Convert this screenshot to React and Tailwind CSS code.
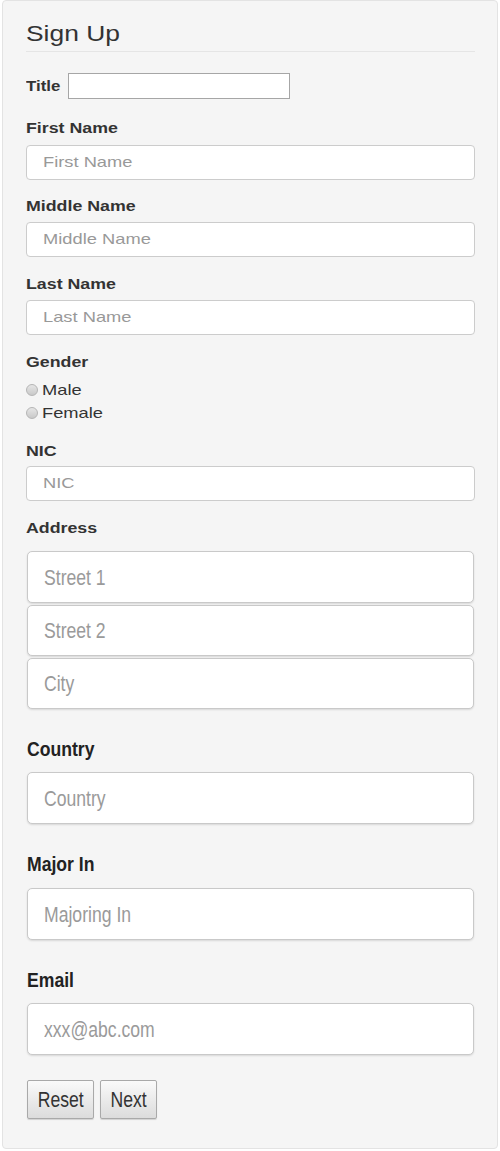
import React from "react";

const Wide = ({ children, className = "" }) => (
  <span className={`inline-block origin-left whitespace-nowrap ${className}`}>{children}</span>
);

// upper form: label + small input
const Field = ({ label, placeholder, top = "mt-4", gap = "mt-[6px]" }) => (
  <>
    <div className={`${top} h-5 leading-5 text-[14px] font-bold text-[#333]`}>
      <Wide className="scale-x-[1.27]">{label}</Wide>
    </div>
    <div className={`${gap} h-[35px] w-full rounded-[4px] border border-[#ccc] bg-white pl-4 flex items-center text-[15px] text-[#999]`}>
      <Wide className="scale-x-[1.22]">{placeholder}</Wide>
    </div>
  </>
);

// lower form: big input
const BigInput = ({ placeholder, className = "", short = false }) => (
  <div
    className={`ml-px ${short ? "h-[51px]" : "h-[52px]"} w-[447px] rounded-[5px] border border-[#c9c9c9] bg-white pl-4 flex items-center text-[22px] text-[#9a9a9a] shadow-[0_1px_2px_rgba(0,0,0,0.12)] ${className}`}
  >
    <Wide className="scale-x-[0.8]">{placeholder}</Wide>
  </div>
);

const BigLabel = ({ children, top = "mt-7" }) => (
  <div className={`${top} ml-px h-6 leading-6 text-[20px] font-bold text-[#222]`}>
    <Wide className="scale-x-[0.88]">{children}</Wide>
  </div>
);

const Radio = ({ label }) => (
  <div className="h-[23px] flex items-center gap-1 text-[15px] text-[#333]">
    <span className="-mt-[2px] h-3 w-3 rounded-full border border-[#b5b5b5] bg-gradient-to-b from-[#e6e6e6] to-[#c9c9c9]" />
    <Wide className="scale-x-[1.22]">{label}</Wide>
  </div>
);

const Button = ({ children, width }) => (
  <button
    className={`${width} h-[39px] rounded-[2px] border border-[#a9a9a9] bg-gradient-to-b from-[#fafafa] to-[#dcdcdc] text-[22px] text-[#333] shadow-[0_1px_1px_rgba(0,0,0,0.15)] flex items-center justify-center`}
  >
    <span className="inline-block origin-center scale-x-[0.8] whitespace-nowrap">{children}</span>
  </button>
);

export default function App() {
  return (
    <div className="min-h-[1151px] bg-white font-['Liberation_Sans',Arial,sans-serif]">
      <div className="ml-[2px] w-[496px] h-[1149px] rounded-[4px] border border-[#e3e3e3] bg-[#f5f5f5] pl-[23px] pr-[22px] pt-[19px] flex flex-col">
        <div className="h-7 leading-7 text-[22px] text-[#333]">
          <Wide className="scale-x-[1.2]">Sign Up</Wide>
        </div>
        <div className="mt-[3px] h-px w-[449px] bg-[#e5e5e5]" />

        <div className="mt-[21px] h-[26px] flex items-center gap-[6px]">
          <span className="text-[14px] font-bold text-[#333] w-[36px]">
            <Wide className="scale-x-[1.2]">Title</Wide>
          </span>
          <input className="h-[26px] w-[222px] border border-[#a6a6a6] bg-white outline-none" />
        </div>

        <Field label="First Name" placeholder="First Name" top="mt-[19px]" gap="mt-[7px]" />
        <Field label="Middle Name" placeholder="Middle Name" />
        <Field label="Last Name" placeholder="Last Name" top="mt-[17px]" />

        <div className="mt-[17px] h-5 leading-5 text-[14px] font-bold text-[#333]">
          <Wide className="scale-x-[1.27]">Gender</Wide>
        </div>
        <div className="mt-[7px]">
          <Radio label="Male" />
          <Radio label="Female" />
        </div>

        <Field label="NIC" placeholder="NIC" top="mt-4" gap="mt-[5px]" />

        <div className="mt-[17px] h-5 leading-5 text-[14px] font-bold text-[#333]">
          <Wide className="scale-x-[1.27]">Address</Wide>
        </div>
        <BigInput placeholder="Street 1" className="mt-[13px]" />
        <BigInput placeholder="Street 2" short className="mt-[2px]" />
        <BigInput placeholder="City" short className="mt-[2px]" />

        <BigLabel>Country</BigLabel>
        <BigInput placeholder="Country" className="mt-[11px]" />

        <BigLabel>Major In</BigLabel>
        <BigInput placeholder="Majoring In" className="mt-3" />

        <BigLabel>Email</BigLabel>
        <BigInput placeholder="xxx@abc.com" className="mt-[11px]" />

        <div className="mt-[25px] ml-px flex gap-[6px]">
          <Button width="w-[67px]">Reset</Button>
          <Button width="w-[57px]">Next</Button>
        </div>
      </div>
    </div>
  );
}
